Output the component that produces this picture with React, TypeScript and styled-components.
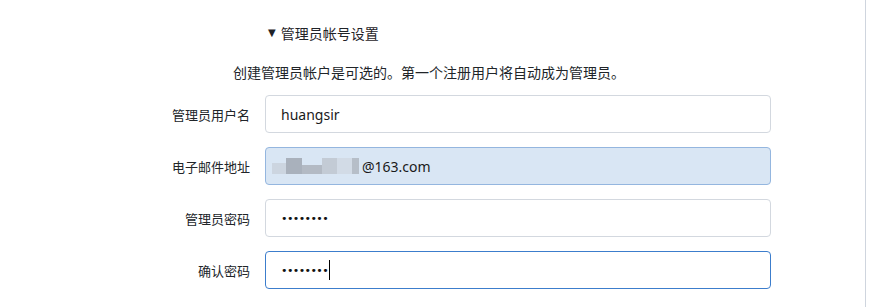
import styled, { createGlobalStyle } from 'styled-components';

const GlobalStyle = createGlobalStyle`
  html, body {
    margin: 0;
    padding: 0;
    background: #ffffff;
  }
  body {
    font-family: "Segoe UI", "Noto Sans", "Noto Sans CJK SC", sans-serif;
    color: #212529;
  }
`;

const Page = styled.div`
  display: flex;
  height: 307px;
  overflow: hidden;
`;

const Content = styled.main`
  flex: 0 0 866px;
  border-right: 1px solid #cfd5de;
  box-sizing: border-box;
`;

const SectionTitle = styled.h3`
  display: flex;
  align-items: center;
  margin: 0;
  padding: 23px 0 0 268px;
  height: 20px;
  font-size: 14px;
  font-weight: 400;
  line-height: 20px;
  color: #1f2328;
  font-family: "Noto Sans CJK SC", sans-serif;
`;

const Marker = styled.span`
  font-size: 10px;
  margin-right: 5px;
  line-height: 20px;
  font-family: "DejaVu Sans", sans-serif;
`;

const Hint = styled.p`
  margin: 19px 0 0 233px;
  font-size: 14px;
  line-height: 20px;
  color: #212529;
  font-family: "Noto Sans CJK SC", sans-serif;
`;

const Form = styled.div`
  display: grid;
  grid-template-columns: 250px 506px;
  column-gap: 15px;
  row-gap: 14px;
  margin-top: 13px;
`;

const Label = styled.label`
  display: flex;
  align-items: center;
  justify-content: flex-end;
  font-size: 13px;
  color: #212529;
  font-family: "Noto Sans CJK SC", sans-serif;
`;

type FieldState = 'idle' | 'filled' | 'focus';

const Field = styled.div<{ $state: FieldState }>`
  display: flex;
  align-items: center;
  height: 38px;
  box-sizing: border-box;
  padding: 0 15px;
  border-radius: 4px;
  font-size: 14px;
  color: #1a1a1a;
  border: 1px solid
    ${({ $state }) =>
      $state === 'filled' ? '#94b6df' : $state === 'focus' ? '#3c7dcc' : '#d3d8df'};
  background: ${({ $state }) => ($state === 'filled' ? '#d9e6f4' : '#ffffff')};
`;

const Dots = styled.span`
  font-family: "DejaVu Sans", sans-serif;
  font-size: 11px;
  letter-spacing: -0.6px;
  color: #111;
`;

const Caret = styled.span`
  display: inline-block;
  width: 0;
  height: 20px;
  border-left: 1px solid #000;
  margin-left: 1px;
`;

const Blur = styled.span`
  display: flex;
  align-items: flex-end;
  height: 16px;
  margin-left: -9px;
  margin-right: 3px;
`;

const BlurBlock = styled.span<{ $w: number; $c: string; $h: number }>`
  display: block;
  width: ${({ $w }) => $w}px;
  height: ${({ $h }) => $h}px;
  background: ${({ $c }) => $c};
`;

const blocks = [
  { w: 14, c: '#ccd5e0', h: 11 },
  { w: 16, c: '#a9b1bc', h: 16 },
  { w: 20, c: '#b3bac4', h: 9 },
  { w: 15, c: '#c3cbd5', h: 16 },
  { w: 15, c: '#d2dbe6', h: 16 },
  { w: 7, c: '#b6bec8', h: 16 },
];

export default function App() {
  return (
    <>
      <GlobalStyle />
      <Page>
        <Content>
          <SectionTitle>
            <Marker>▼</Marker>管理员帐号设置
          </SectionTitle>
          <Hint>创建管理员帐户是可选的。第一个注册用户将自动成为管理员。</Hint>
          <Form>
            <Label>管理员用户名</Label>
            <Field $state="idle">huangsir</Field>

            <Label>电子邮件地址</Label>
            <Field $state="filled">
              <Blur>
                {blocks.map((b, i) => (
                  <BlurBlock key={i} $w={b.w} $c={b.c} $h={b.h} />
                ))}
              </Blur>
              @163.com
            </Field>

            <Label>管理员密码</Label>
            <Field $state="idle">
              <Dots>••••••••</Dots>
            </Field>

            <Label>确认密码</Label>
            <Field $state="focus">
              <Dots>••••••••</Dots>
              <Caret />
            </Field>
          </Form>
        </Content>
      </Page>
    </>
  );
}
